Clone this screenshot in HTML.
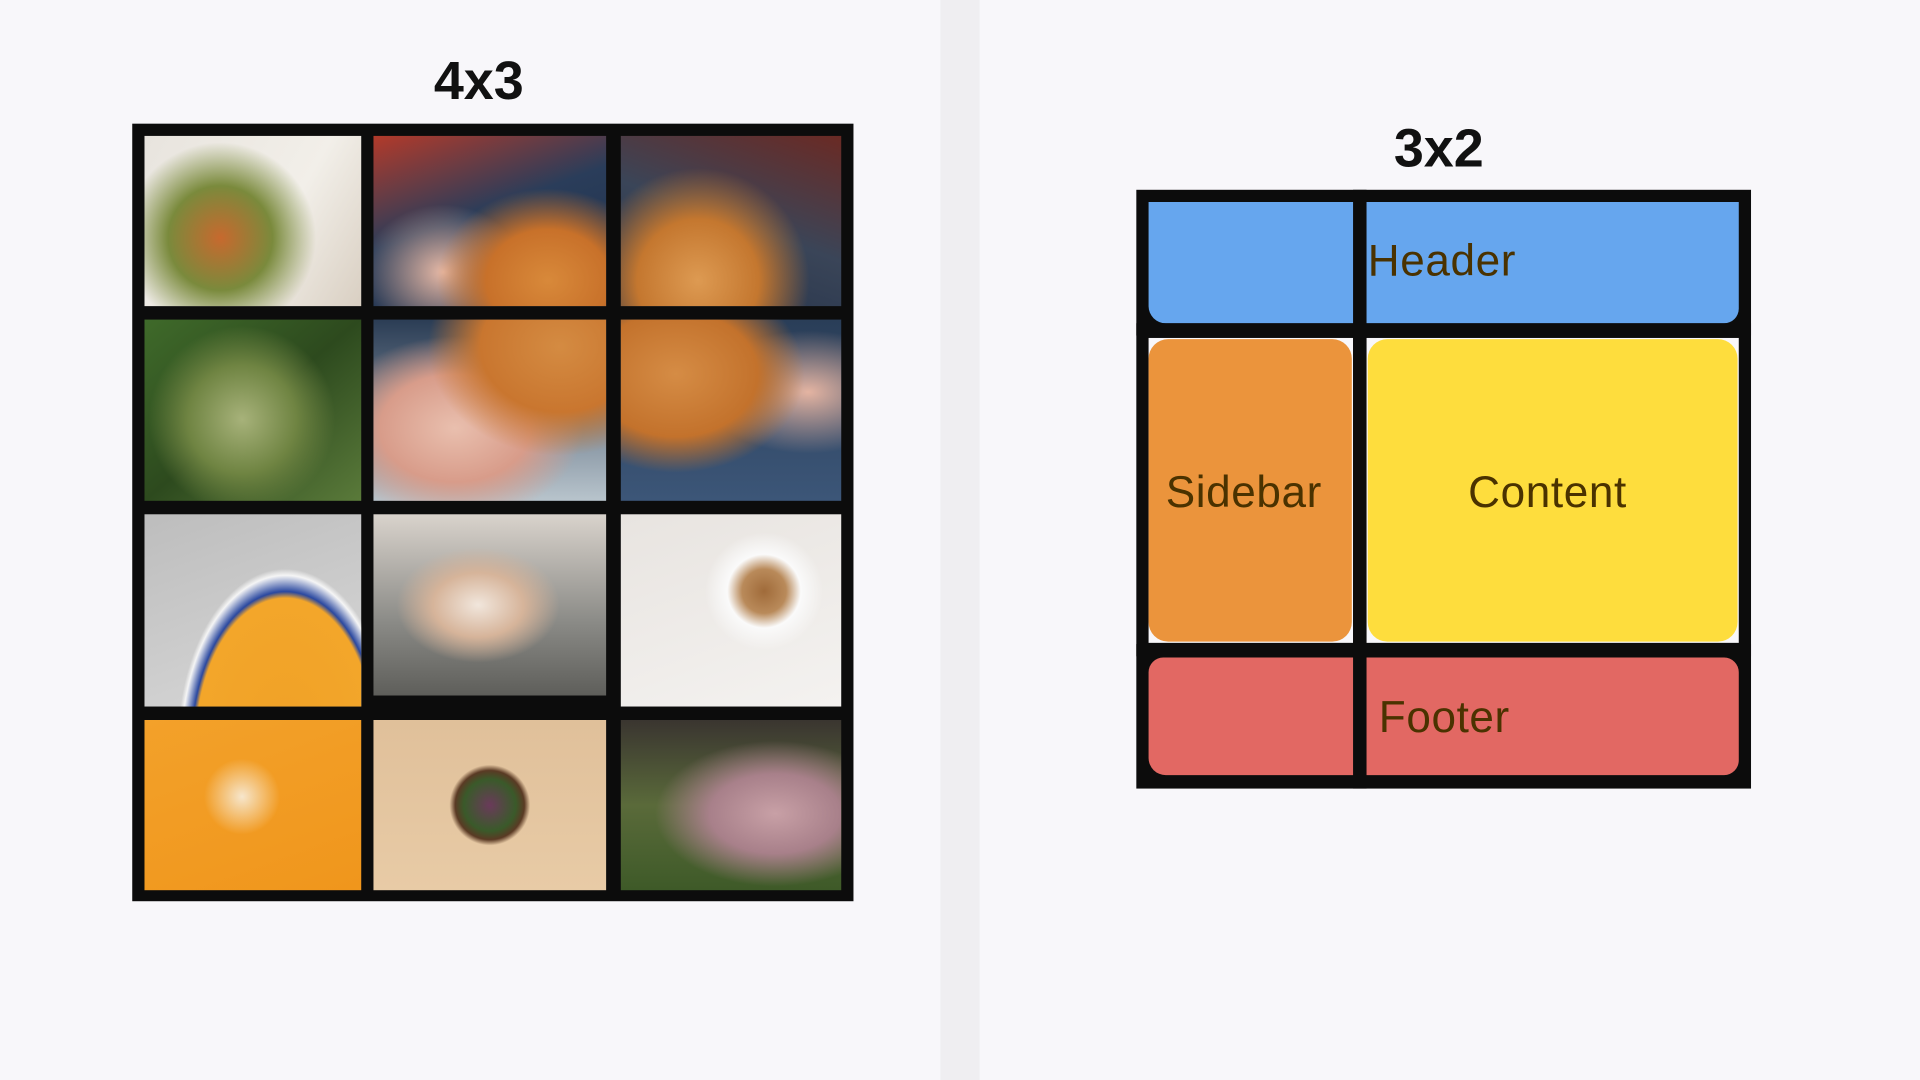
<!DOCTYPE html>
<html><head><meta charset="utf-8"><style>
html,body{margin:0;padding:0;width:1920px;height:1080px;overflow:hidden;background:#f8f7fa}
#w{position:absolute;left:0;top:0;width:1568px;height:882px;transform:scale(1.22449);transform-origin:0 0;font-family:"Liberation Sans",sans-serif}
.a{position:absolute}
.t{font-weight:bold;font-size:44px;color:#111;text-align:center}
.c{position:absolute}
.lbl{position:absolute;color:#4a3200;font-size:36px;letter-spacing:0.5px}
</style></head><body><div id="w">
<div class="a" style="left:768px;top:0;width:32px;height:882px;background:#efeef1"></div>
<div class="a t" style="left:291px;top:42px;width:200px">4x3</div>
<div class="a" style="left:108px;top:101px;width:589px;height:635px;background:#0c0c0c"></div>
<div class="c" style="left:118px;top:111px;width:177px;height:139px;background:radial-gradient(circle at 35% 60%,#c7692e 0,#7a8a3c 30%,transparent 55%),linear-gradient(120deg,#e8e4de,#f2efe9 60%,#d9cfc2)"></div>
<div class="c" style="left:305px;top:111px;width:190px;height:139px;background:radial-gradient(ellipse at 75% 85%,#d8893a 0,#c8712a 25%,transparent 45%),radial-gradient(ellipse at 30% 80%,#e7b9a6 0,transparent 35%),linear-gradient(160deg,#b23a2a,#2a3d5a 45%,#1e2f4a)"></div>
<div class="c" style="left:507px;top:111px;width:180px;height:139px;background:radial-gradient(ellipse at 35% 85%,#dd9a52 0,#c4772f 30%,transparent 55%),linear-gradient(200deg,#6a2a24,#3a4558 50%,#24324a)"></div>
<div class="c" style="left:118px;top:261px;width:177px;height:148px;background:radial-gradient(circle at 45% 55%,#a7b27a 0,#6f8442 35%,transparent 60%),linear-gradient(140deg,#3f6a2a,#2d4a1e 50%,#5a7a3a)"></div>
<div class="c" style="left:305px;top:261px;width:190px;height:148px;background:radial-gradient(ellipse at 80% 15%,#d48b42 0,#c9762f 30%,transparent 50%),radial-gradient(ellipse at 35% 60%,#e9bfae 0,#d89c8a 35%,transparent 60%),linear-gradient(180deg,#2b3d55,#b8c4cc)"></div>
<div class="c" style="left:507px;top:261px;width:180px;height:148px;background:radial-gradient(ellipse at 25% 30%,#d58c45 0,#c3722c 35%,transparent 55%),radial-gradient(ellipse at 85% 40%,#e4b4a2 0,transparent 40%),linear-gradient(180deg,#2a3e58,#3c5678)"></div>
<div class="c" style="left:118px;top:420px;width:177px;height:157px;background:radial-gradient(ellipse at 65% 120%,#f0a127 0,#f3a62a 45%,#2a48a0 47%,#f5f5f5 52%,transparent 54%),linear-gradient(160deg,#bdbdbd,#d8d8d8)"></div>
<div class="c" style="left:305px;top:420px;width:190px;height:148px;background:radial-gradient(ellipse at 45% 50%,#f1e6dc 0,#d6b49a 25%,transparent 45%),linear-gradient(180deg,#d9d3cc,#8a8a86 60%,#5e5e5a)"></div>
<div class="c" style="left:507px;top:420px;width:180px;height:157px;background:radial-gradient(circle at 65% 40%,#a06b3a 0,#b98a5a 12%,#fafafa 20%,transparent 32%),linear-gradient(160deg,#e8e4e0,#f4f2f0)"></div>
<div class="c" style="left:118px;top:588px;width:177px;height:139px;background:radial-gradient(circle at 45% 45%,#f6e6cc 0,transparent 25%),linear-gradient(160deg,#f3a12a,#f0961c)"></div>
<div class="c" style="left:305px;top:588px;width:190px;height:139px;background:radial-gradient(circle at 50% 50%,#6a3a5a 0,#3a5a2a 18%,#5a3a24 24%,transparent 28%),linear-gradient(180deg,#e0c09a,#e8cba6)"></div>
<div class="c" style="left:507px;top:588px;width:180px;height:139px;background:radial-gradient(ellipse at 70% 55%,#c8a0a6 0,#a8808a 30%,transparent 55%),linear-gradient(180deg,#3a3530,#5a6a3a 50%,#3e5a28)"></div>

<div class="a t" style="left:1075px;top:97px;width:200px">3x2</div>
<div class="a" style="left:928px;top:155px;width:502px;height:489px;background:#0c0c0c"></div>
<div class="a" style="left:938px;top:276px;width:167px;height:249px;background:#f8f7fa"></div>
<div class="a" style="left:1116px;top:276px;width:304px;height:249px;background:#f8f7fa"></div>
<div class="a" style="left:938px;top:165px;width:482px;height:99px;background:#66a6ee;border-radius:0 0 12px 14px"></div>
<div class="a" style="left:938px;top:277px;width:166px;height:247px;background:#eb943c;border-radius:16px"></div>
<div class="a" style="left:1117px;top:277px;width:302px;height:247px;background:#fedd3d;border-radius:16px"></div>
<div class="a" style="left:938px;top:537px;width:482px;height:96px;background:#e26863;border-radius:12px 12px 12px 14px"></div>
<div class="a" style="left:1105px;top:155px;width:11px;height:489px;background:#0c0c0c"></div>
<div class="a" style="left:928px;top:264px;width:502px;height:10px;background:#0c0c0c"></div>
<div class="a" style="left:928px;top:526px;width:502px;height:10px;background:#0c0c0c"></div>
<div class="lbl" style="left:1117px;top:192px">Header</div>
<div class="lbl" style="left:952px;top:381px">Sidebar</div>
<div class="lbl" style="left:1199px;top:381px">Content</div>
<div class="lbl" style="left:1126px;top:565px">Footer</div>
</div></body></html>
